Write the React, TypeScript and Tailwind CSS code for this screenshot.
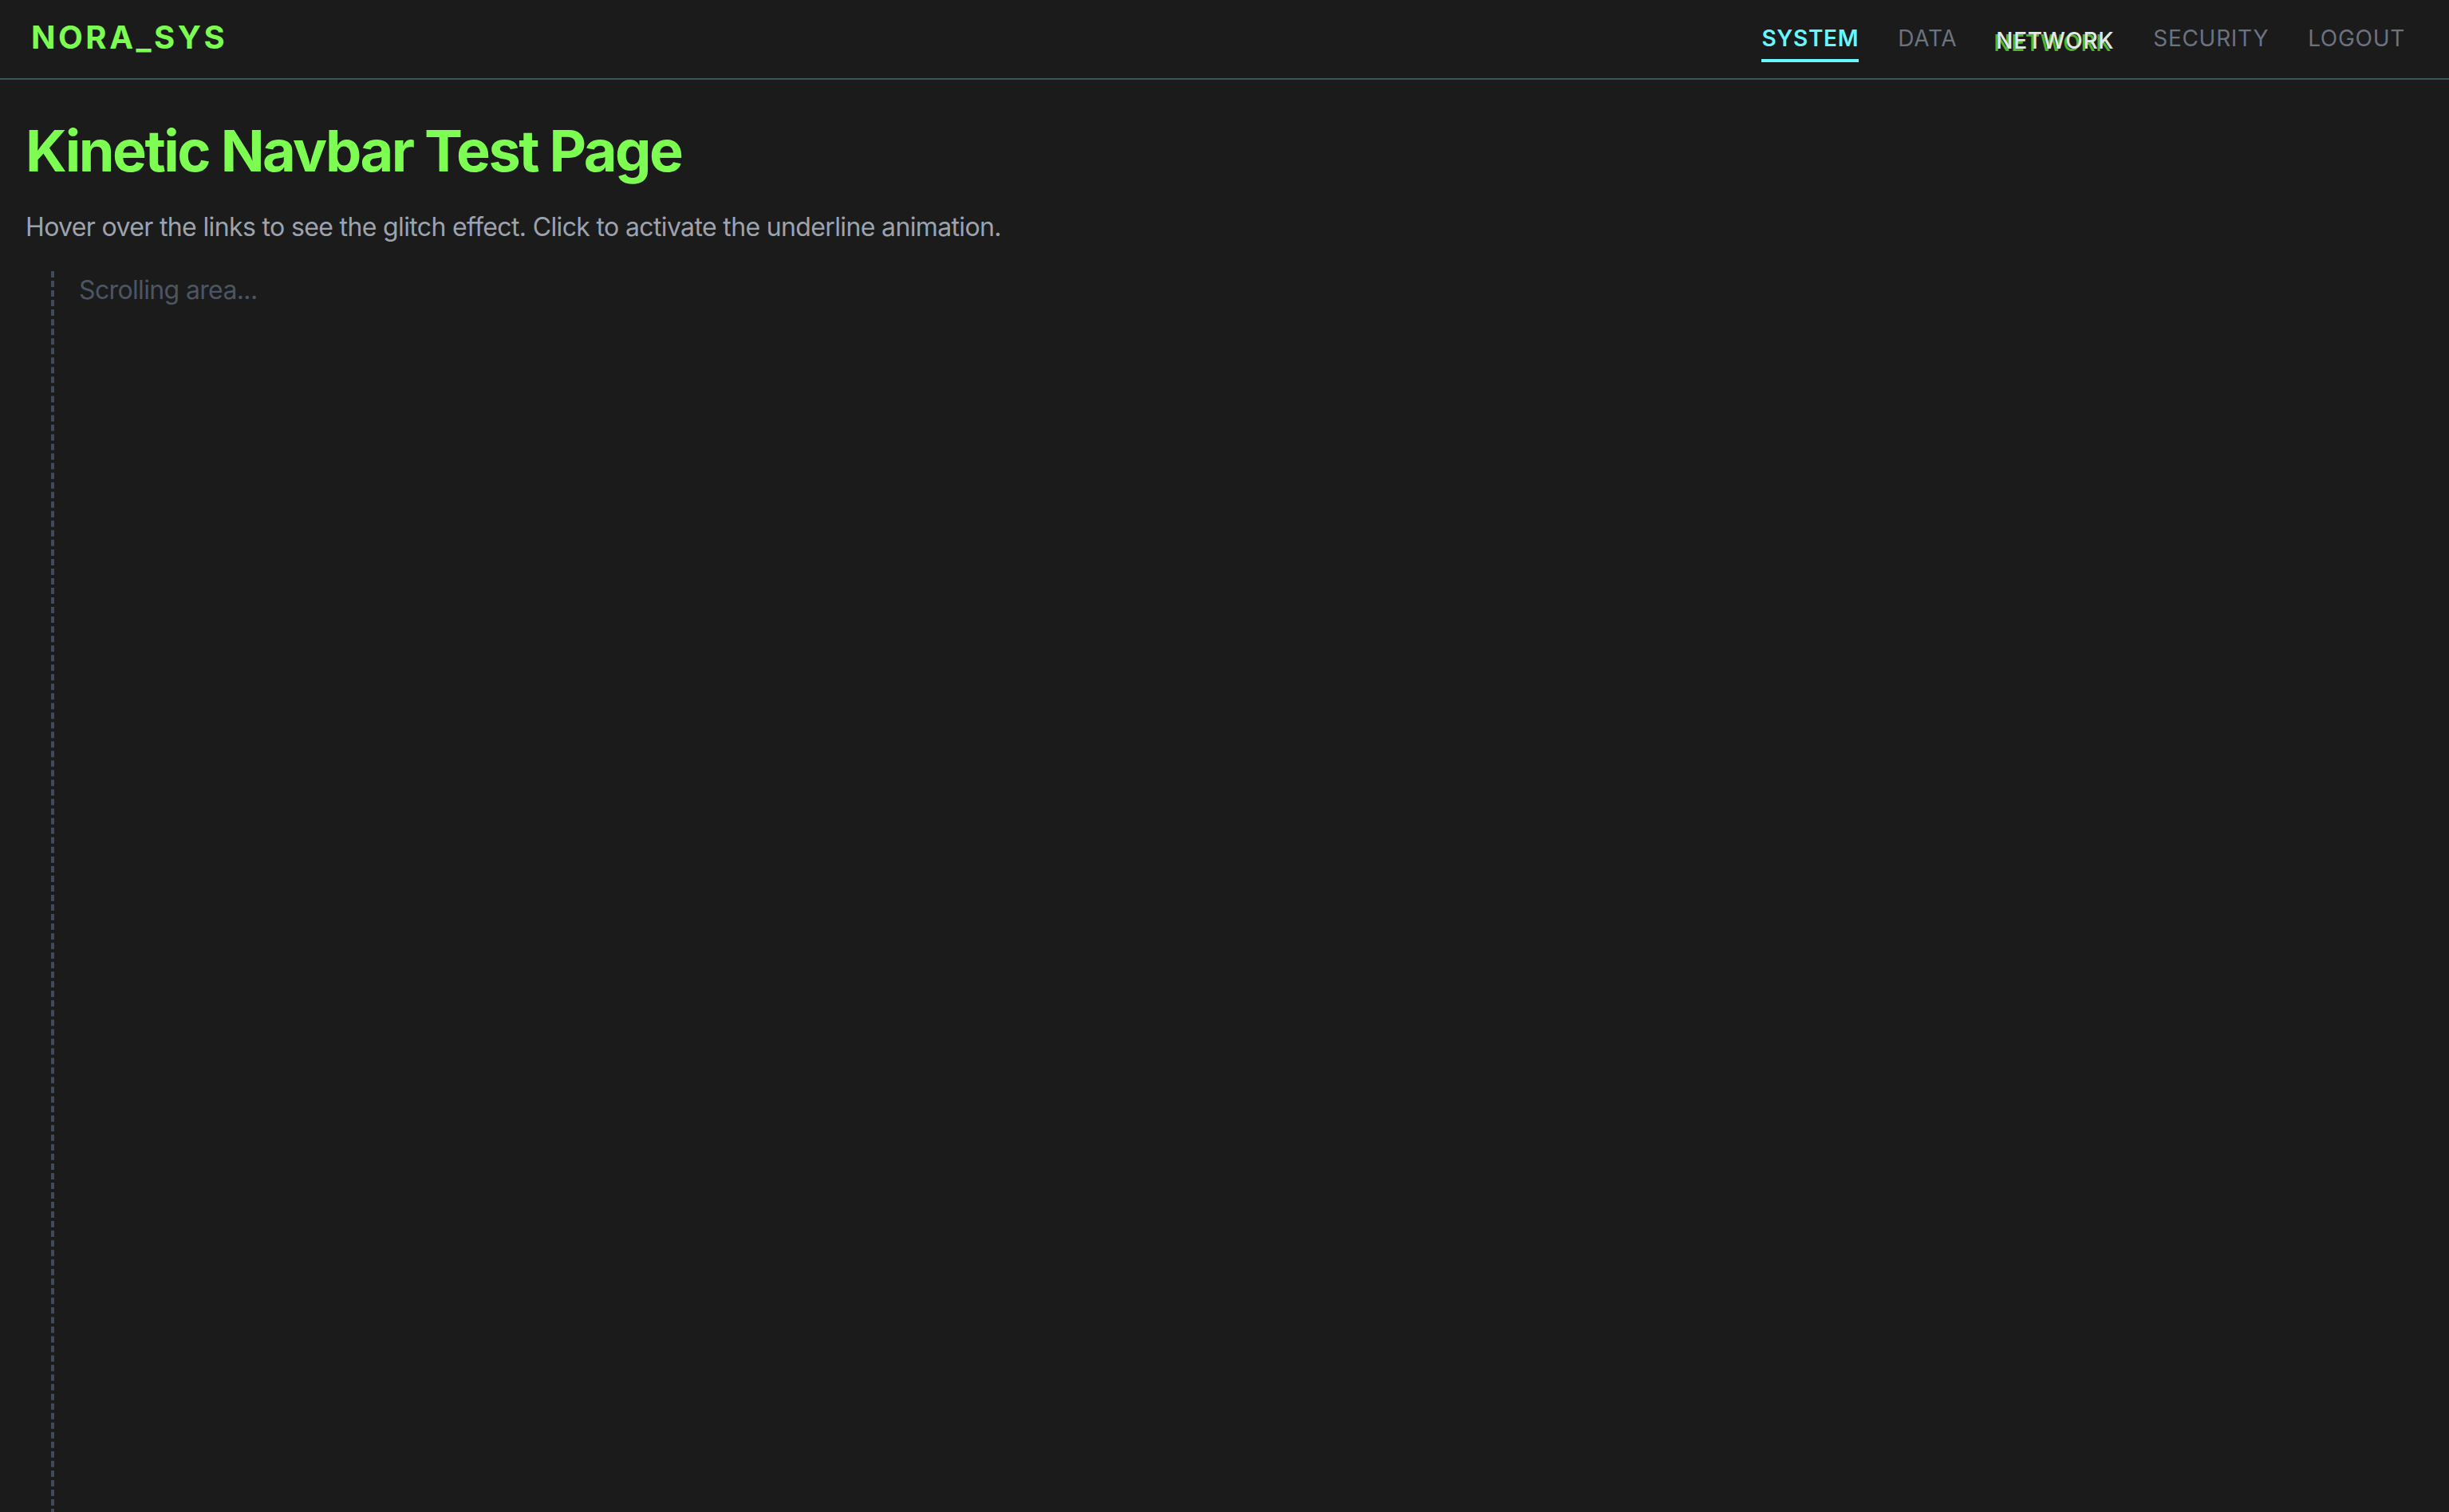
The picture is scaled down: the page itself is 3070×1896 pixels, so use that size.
import React from "react";

const links = ["SYSTEM", "DATA", "NETWORK", "SECURITY", "LOGOUT"];

export default function App() {
  return (
    <div className="min-h-screen bg-[#1b1b1b] font-['Inter','Liberation_Sans',sans-serif] overflow-hidden">
      <nav className="flex h-[100px] items-start justify-between border-b-2 border-[#35595a] pl-[39px] pr-[55px]">
        <div className="pt-[19px] text-[40px] leading-[56px] font-bold tracking-[0.088em] text-[#7dfc52]">
          NORA_SYS
        </div>
        <ul className="flex gap-[49px] pt-[28px]">
          {links.map((l) => {
            if (l === "SYSTEM") {
              return (
                <li key={l} className="relative pb-[10px] text-[28px] leading-[40px] font-semibold tracking-[0.025em] text-[#68f7ff]">
                  {l}
                  <span className="absolute bottom-0 left-0 h-[4px] w-full bg-[#68f7ff]" />
                </li>
              );
            }
            if (l === "NETWORK") {
              return (
                <li
                  key={l}
                  className="relative translate-y-[3px] pb-[10px] text-[28px] leading-[40px] font-medium tracking-[0.025em] text-[#e3e8e6] [text-shadow:-3px_3px_0_#4fb82a]"
                >
                  {l}
                </li>
              );
            }
            return (
              <li key={l} className="relative pb-[10px] text-[28px] leading-[40px] font-normal tracking-[0.025em] text-[#6b7280]">
                {l}
              </li>
            );
          })}
        </ul>
      </nav>
      <main className="px-[32px] pt-[49px]">
        <h1 className="text-[72px] leading-[80px] font-bold tracking-[-0.035em] text-[#7dfc52]">
          Kinetic Navbar Test Page
        </h1>
        <p className="mt-[32px] text-[32px] leading-[48px] tracking-[-0.02em] text-[#9ca3af]">
          Hover over the links to see the glitch effect. Click to activate the underline animation.
        </p>
        <div className="ml-[32px] mt-[31px] h-[1560px] border-l-4 border-dashed border-[#404a5a] pl-[31px]">
          <p className="text-[32px] leading-[48px] tracking-[-0.02em] text-[#4b5563]">Scrolling area...</p>
        </div>
      </main>
    </div>
  );
}
